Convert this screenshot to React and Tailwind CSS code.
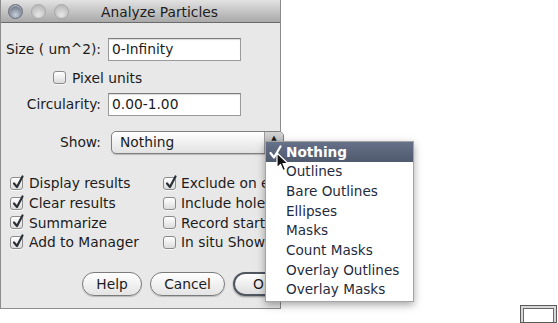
import React from "react";

const font = { fontFamily: '"DejaVu Sans", "Liberation Sans", sans-serif' };

function Light({ active }) {
  return (
    <div
      className={
        active
          ? "h-[15px] w-[15px] rounded-full border border-[#6a6f78] bg-[radial-gradient(circle_at_50%_75%,#c9d0dc,#7e8696_60%,#5e6573)] shadow-[inset_0_1px_1px_rgba(255,255,255,0.6)]"
          : "h-[15px] w-[15px] rounded-full border border-[#a8a8a8] bg-[radial-gradient(circle_at_50%_75%,#e6e6e6,#c4c4c4_60%,#b2b2b2)]"
      }
    />
  );
}

function Check({ on }) {
  return (
    <div className="relative h-[13px] w-[13px] shrink-0 rounded-[3px] border border-[#8b8b8b] bg-gradient-to-b from-white to-[#dcdcdc] shadow-[0_1px_0_rgba(255,255,255,0.7)]">
      {on && (
        <svg className="absolute left-[1px] top-[-3px]" width="12" height="14" viewBox="0 0 12 14">
          <path d="M2 8.5 L5 12 L10.5 1.5" fill="none" stroke="#2a2f36" strokeWidth="2.2" strokeLinecap="round" strokeLinejoin="round" />
        </svg>
      )}
    </div>
  );
}

function Box({ on, label, gap = "gap-[6px]" }) {
  return (
    <div className={`flex h-[19.7px] items-center ${gap}`}>
      <Check on={on} />
      <span className="whitespace-nowrap">{label}</span>
    </div>
  );
}

function Field({ value }) {
  return (
    <div className="flex h-[23px] w-[133px] items-center border border-[#9a9a9a] border-t-[#7d7d7d] bg-white pl-[3px] shadow-[inset_0_1px_1px_rgba(0,0,0,0.15)]">
      {value}
    </div>
  );
}

function Button({ children, w, primary }) {
  return (
    <div
      className={
        primary
          ? `flex h-[24px] ${w} shrink-0 items-center justify-center rounded-full border-2 border-[#4f5660] bg-gradient-to-b from-white to-[#dedede] shadow-[0_1px_2px_rgba(0,0,0,0.4)]`
          : `flex h-[24px] ${w} shrink-0 items-center justify-center rounded-full border border-[#7b7b7b] bg-gradient-to-b from-white to-[#e4e4e4] shadow-[0_1px_1px_rgba(0,0,0,0.2)]`
      }
    >
      {children}
    </div>
  );
}

const items = ["Nothing", "Outlines", "Bare Outlines", "Ellipses", "Masks", "Count Masks", "Overlay Outlines", "Overlay Masks"];

export default function App() {
  return (
    <div className="flex h-[323px] w-[558px] overflow-hidden bg-white text-[13.8px] text-[#1c1c1c]" style={font}>
      <div className="relative flex h-[309px] w-[281px] shrink-0 flex-col border border-t-0 border-[#8c8c8c] bg-[#e8e8e8]">
        <div className="relative flex h-[23px] shrink-0 items-center border-b border-[#6b6b6b] bg-gradient-to-b from-[#e2e2e2] to-[#a9a9a9]">
          <div className="flex items-center gap-[8px] pl-[7px]">
            <Light active />
            <Light />
            <Light />
          </div>
          <div className="absolute inset-x-0 top-[2px] pl-[38px] text-center text-[13.8px] text-[#202020]">Analyze Particles</div>
        </div>

        <div className="flex flex-col">
          <div className="mt-[15px] flex items-center">
            <div className="w-[100px] shrink-0 text-right">Size ( um^2):</div>
            <div className="ml-[7px]">
              <Field value="0-Infinity" />
            </div>
          </div>
          <div className="ml-[52px] mt-[7px]">
            <Box label="Pixel units" gap="gap-[6px]" />
          </div>
          <div className="mt-[5px] flex items-center">
            <div className="w-[100px] shrink-0 text-right">Circularity:</div>
            <div className="ml-[7px]">
              <Field value="0.00-1.00" />
            </div>
          </div>
          <div className="mt-[15px] flex items-center">
            <div className="w-[100px] shrink-0 text-right">Show:</div>
            <div className="ml-[10px] flex h-[23px] w-[173px] shrink-0 overflow-hidden rounded-[5px] border border-[#7f7f7f] bg-gradient-to-b from-white to-[#e2e2e2] shadow-[0_1px_1px_rgba(0,0,0,0.2)]">
              <div className="flex flex-1 items-center pl-[8px]">Nothing</div>
              <div className="flex w-[19px] justify-center border-l border-[#9a9a9a] bg-gradient-to-b from-[#d4d4d4] to-[#a8a8a8] pt-[3px] text-[7px] leading-none">▲</div>
            </div>
          </div>

          <div className="mt-[20px] flex">
            <div className="ml-[9px] flex w-[153px] shrink-0 flex-col">
              <Box on label="Display results" />
              <Box on label="Clear results" />
              <Box on label="Summarize" />
              <Box on label="Add to Manager" />
            </div>
            <div className="flex shrink-0 flex-col">
              <Box on label="Exclude on edges" gap="gap-[5px]" />
              <Box label="Include holes" gap="gap-[5px]" />
              <Box label="Record starts" gap="gap-[5px]" />
              <Box label="In situ Show" gap="gap-[5px]" />
            </div>
          </div>

          <div className="mt-[20px] flex gap-[8px] pl-[81px]">
            <Button w="w-[60px]">Help</Button>
            <Button w="w-[75px]">Cancel</Button>
            <Button w="w-[60px]" primary>
              OK
            </Button>
          </div>
        </div>

        <div className="absolute left-[264px] top-[141px] z-10 w-[149px] border border-[#a3a3a3] bg-white pb-[1px] text-[13.6px] text-[#1f2b3d] shadow-[0_3px_8px_rgba(0,0,0,0.35)]">
          {items.map((it, i) => (
            <div
              key={it}
              className={
                i === 0
                  ? "relative flex h-[19.7px] items-center bg-gradient-to-b from-[#66718a] to-[#4f5a6e] pl-[20px] font-bold text-white"
                  : "flex h-[19.7px] items-center pl-[20px]"
              }
            >
              {i === 0 && (
                <svg className="absolute left-[3px] top-[3px]" width="13" height="14" viewBox="0 0 13 14">
                  <path d="M1.5 8 L5 12.5 L11.5 1.5" fill="none" stroke="#fff" strokeWidth="2.2" strokeLinecap="round" strokeLinejoin="round" />
                </svg>
              )}
              {it}
            </div>
          ))}
        </div>

        <svg className="absolute left-[275px] top-[152px] z-20" width="14" height="21" viewBox="0 0 14 21">
          <path d="M1 1 L1 16 L4.5 12.5 L7 18.5 L9.5 17.5 L7 11.5 L12 11.5 Z" fill="#111" stroke="#fff" strokeWidth="1.2" strokeLinejoin="round" />
        </svg>
      </div>

      <div className="flex flex-1 items-end justify-end">
        <div className="mr-[1px] flex h-[18px] w-[37px] items-stretch border border-[#5a5a5a] bg-[#d8d8d8] p-[2px] pb-0">
          <div className="flex-1 border border-b-0 border-[#6a6a6a] bg-white" />
        </div>
      </div>
    </div>
  );
}
